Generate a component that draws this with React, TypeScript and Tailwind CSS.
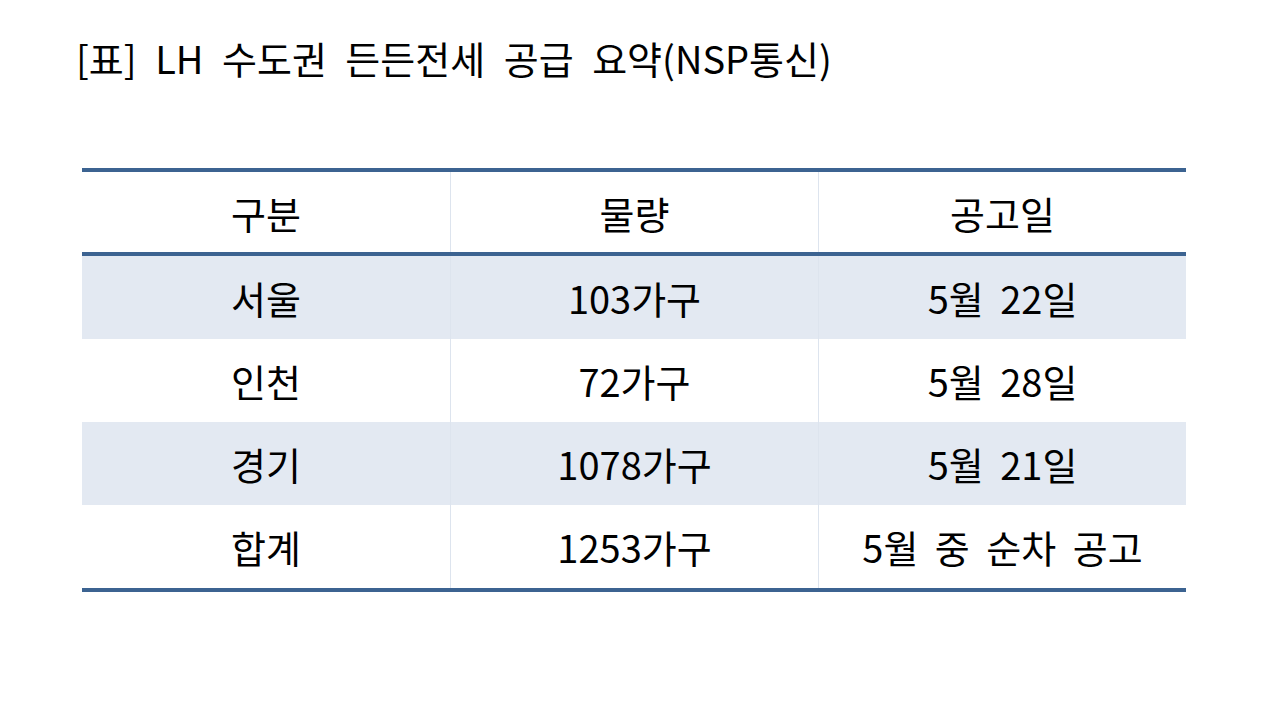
const rows = [
  { name: "서울", amount: "103가구", date: "5월 22일", shade: true },
  { name: "인천", amount: "72가구", date: "5월 28일", shade: false },
  { name: "경기", amount: "1078가구", date: "5월 21일", shade: true },
  { name: "합계", amount: "1253가구", date: "5월 중 순차 공고", shade: false },
];

const font = { fontFamily: '"Noto Sans CJK KR", "Liberation Sans", sans-serif' };

export default function App() {
  return (
    <div className="w-[1280px] h-[709px] bg-white text-black" style={font}>
      <h1 className="pl-[76px] pt-[32px] text-[38px] leading-[52px] [word-spacing:10px]">
        [표] LH 수도권 든든전세 공급 요약(NSP통신)
      </h1>

      <div className="mt-[84px] ml-[82px] w-[1104px] border-t-4 border-b-4 border-[#3c6391]">
        {/* Header */}
        <div className="grid grid-cols-3 h-[84px] border-b-4 border-[#3c6391]">
          {["구분", "물량", "공고일"].map((h, i) => (
            <div
              key={h}
              className={`flex items-center justify-center text-[38px] ${i > 0 ? "border-l border-[#dde4ee]" : ""}`}
            >
              {h}
            </div>
          ))}
        </div>

        {rows.map((r) => (
          <div
            key={r.name}
            className={`grid grid-cols-3 h-[83px] ${r.shade ? "bg-[#e3e9f2]" : "bg-white"}`}
          >
            <div className="flex items-center justify-center text-[38px]">{r.name}</div>
            <div className="flex items-center justify-center text-[38px] border-l border-[#dde4ee]">{r.amount}</div>
            <div className="flex items-center justify-center text-[38px] border-l border-[#dde4ee] [word-spacing:8px]">{r.date}</div>
          </div>
        ))}
      </div>
    </div>
  );
}
